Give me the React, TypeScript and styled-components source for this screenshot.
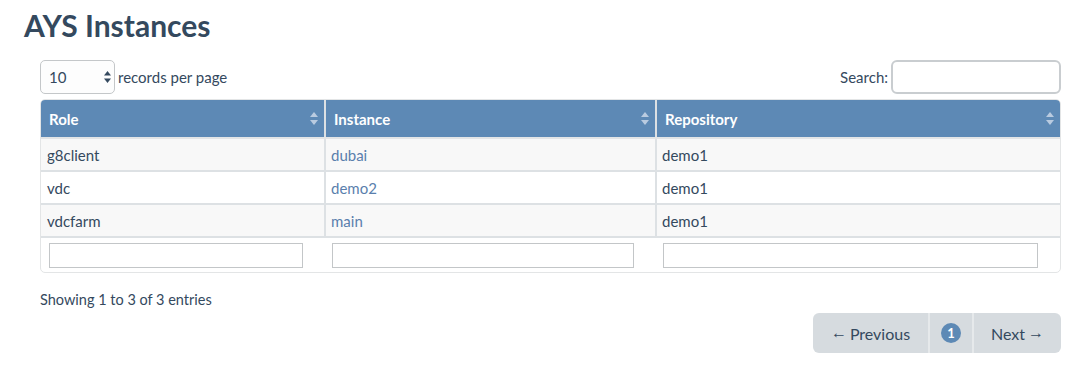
import React from "react";
import styled, { createGlobalStyle } from "styled-components";

const GlobalStyle = createGlobalStyle`
  html, body { margin: 0; padding: 0; background: #ffffff; }
  body { font-family: Lato, "Open Sans", "Liberation Sans", sans-serif; color: #34495e; }
  * { box-sizing: border-box; }
`;

const Page = styled.div`
  width: 1082px;
  padding: 7px 21px 0 24px;
`;

const Title = styled.h1`
  margin: 0;
  font-size: 30px;
  line-height: 36px;
  font-weight: 700;
  color: #34495e;
`;

const Content = styled.div`
  padding: 17px 0 0 16px;
`;

const Controls = styled.div`
  display: flex;
  justify-content: space-between;
  align-items: center;
  height: 34px;
  margin-bottom: 5px;
`;

const LengthLabel = styled.label`
  display: flex;
  align-items: center;
  gap: 3px;
  font-size: 15px;
`;

const SelectWrap = styled.div`
  position: relative;
  width: 75px;
  height: 34px;
`;

const Select = styled.select`
  appearance: none;
  -webkit-appearance: none;
  width: 100%;
  height: 100%;
  border: 1px solid #c4c7c9;
  border-radius: 5px;
  background: #fdfdfd;
  padding: 0 8px;
  font-family: inherit;
  font-size: 15px;
  color: #34495e;
  outline: none;
`;

const SelectArrows = styled.svg`
  position: absolute;
  right: 4px;
  top: 11px;
  pointer-events: none;
`;

const SearchLabel = styled.label`
  display: flex;
  align-items: center;
  gap: 3px;
  font-size: 15px;
`;

const SearchInput = styled.input`
  width: 170px;
  height: 34px;
  border: 2px solid #c9cdd0;
  border-radius: 6px;
  outline: none;
  background: #fff;
`;

const TableFrame = styled.div`
  border: 1px solid #e3e5e6;
  border-radius: 5px;
  overflow: hidden;
  width: 1021px;
`;

const Table = styled.table`
  width: 100%;
  border-collapse: collapse;
  table-layout: fixed;
  font-size: 15px;
`;

const HeadCell = styled.th<{ $w: number }>`
  width: ${(p) => p.$w}px;
  position: relative;
  background: #5d89b5;
  color: #ffffff;
  font-weight: 700;
  text-align: left;
  height: 38px;
  padding: 0 8px;
  border-left: 2px solid #dde1e4;
  border-bottom: 2px solid #e3e5e6;
  &:first-child { border-left: none; }
`;

const SortIcon = styled.svg`
  position: absolute;
  right: 6px;
  top: 12px;
`;

const Row = styled.tr<{ $odd: boolean }>`
  background: ${(p) => (p.$odd ? "#f8f8f8" : "#ffffff")};
`;

const Cell = styled.td`
  height: 33px;
  padding: 0 5px;
  color: #34495e;
  border-left: 2px solid #dde1e4;
  border-bottom: 2px solid #dde1e4;
  &:first-child { border-left: none; padding-left: 6px; }
`;

const Link = styled.a`
  color: #5a7fad;
  text-decoration: none;
`;

const FilterCell = styled.td`
  height: 35px;
  padding: 5px 22px 4px 7px;
  &:first-child { padding-left: 8px; }
`;

const FilterInput = styled.input`
  display: block;
  width: 100%;
  height: 25px;
  border: 1px solid #c3c6c8;
  background: #fff;
  outline: none;
`;

const Footer = styled.div`
  padding-top: 18px;
  display: flex;
  flex-direction: column;
`;

const Info = styled.div`
  font-size: 14.5px;
  line-height: 18px;
  color: #34495e;
`;

const Pagination = styled.div`
  align-self: flex-end;
  margin-top: 4px;
  display: flex;
  height: 40px;
  background: #d6dbdf;
  border-radius: 6px;
  overflow: hidden;
`;

const PageBtn = styled.div<{ $w: number }>`
  width: ${(p) => p.$w}px;
  display: flex;
  align-items: center;
  justify-content: center;
  gap: 3px;
  font-size: 16px;
  color: #34495e;
  border-left: 2px solid #e6e9eb;
  &:first-child { border-left: none; }
`;

const Badge = styled.span`
  width: 20px;
  height: 20px;
  border-radius: 50%;
  background: #5d89b5;
  color: #fff;
  font-weight: 700;
  font-size: 13px;
  display: flex;
  align-items: center;
  justify-content: center;
`;

const Arrow = styled.span`
  font-family: "Liberation Sans", sans-serif;
  font-size: 16px;
`;

const Sort = () => (
  <SortIcon width="8" height="13" viewBox="0 0 8 13">
    <path d="M4 0 L8 5 L0 5 Z" fill="#b9cbe0" />
    <path d="M4 13 L8 8 L0 8 Z" fill="#b9cbe0" />
  </SortIcon>
);

const rows = [
  { role: "g8client", instance: "dubai", repo: "demo1" },
  { role: "vdc", instance: "demo2", repo: "demo1" },
  { role: "vdcfarm", instance: "main", repo: "demo1" },
];

export default function App() {
  return (
    <Page>
      <GlobalStyle />
      <Title>AYS Instances</Title>
      <Content>
        <Controls>
          <LengthLabel>
            <SelectWrap>
              <Select defaultValue="10">
                <option value="10">10</option>
                <option value="25">25</option>
                <option value="50">50</option>
                <option value="100">100</option>
              </Select>
              <SelectArrows width="7" height="12" viewBox="0 0 7 12">
                <path d="M3.5 0 L7 4.5 L0 4.5 Z" fill="#34495e" />
                <path d="M3.5 12 L7 7.5 L0 7.5 Z" fill="#34495e" />
              </SelectArrows>
            </SelectWrap>
            records per page
          </LengthLabel>
          <SearchLabel>
            Search:
            <SearchInput type="search" />
          </SearchLabel>
        </Controls>
        <TableFrame>
          <Table>
            <thead>
              <tr>
                <HeadCell $w={284}>Role<Sort /></HeadCell>
                <HeadCell $w={331}>Instance<Sort /></HeadCell>
                <HeadCell $w={404}>Repository<Sort /></HeadCell>
              </tr>
            </thead>
            <tbody>
              {rows.map((r, i) => (
                <Row key={r.role} $odd={i % 2 === 0}>
                  <Cell>{r.role}</Cell>
                  <Cell><Link href="#">{r.instance}</Link></Cell>
                  <Cell>{r.repo}</Cell>
                </Row>
              ))}
              <tr>
                <FilterCell><FilterInput type="text" /></FilterCell>
                <FilterCell><FilterInput type="text" /></FilterCell>
                <FilterCell><FilterInput type="text" /></FilterCell>
              </tr>
            </tbody>
          </Table>
        </TableFrame>
        <Footer>
          <Info>Showing 1 to 3 of 3 entries</Info>
          <Pagination>
            <PageBtn $w={115}><Arrow>←</Arrow>Previous</PageBtn>
            <PageBtn $w={44}><Badge>1</Badge></PageBtn>
            <PageBtn $w={89}>Next<Arrow>→</Arrow></PageBtn>
          </Pagination>
        </Footer>
      </Content>
    </Page>
  );
}
